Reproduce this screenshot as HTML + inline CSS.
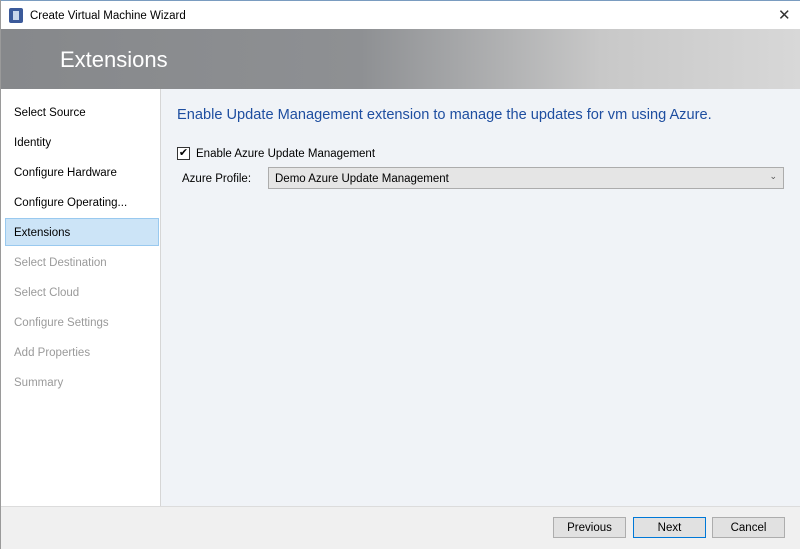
<!DOCTYPE html>
<html><head><style>
*{margin:0;padding:0;box-sizing:border-box}
body{width:800px;height:549px;overflow:hidden;font-family:"Liberation Sans",sans-serif;font-size:11.5px;color:#000;background:#fff;position:relative;border:1px solid #9a9a9a;border-top:none}
.abs{position:absolute}
#title{left:0;top:0;width:800px;height:29px;background:#fff;border-top:1px solid #7a9cc0}
#banner{left:0;top:29px;width:800px;height:60px;background:linear-gradient(90deg,#86888b 0%,#8e9093 45%,#c8c8c8 75%,#d8d8d8 100%)}
#nav{left:0;top:89px;width:160px;height:417px;background:#fff;border-right:1px solid #d6d6d6}
#content{left:160px;top:89px;width:639px;height:417px;background:#f0f3f7}
#footer{left:0;top:506px;width:800px;height:43px;background:#f0f0f0;border-top:1px solid #dcdcdc}
.nav{position:absolute;left:13px;font-size:11.5px}
.dis{color:#9a9a9a}
.btn{position:absolute;top:517px;width:73px;height:21px;background:#e1e1e1;border:1px solid #adadad;text-align:center;line-height:20px;font-size:11.5px}
</style></head><body>
<div id="title" class="abs">
 <div class="abs" style="left:8px;top:7px;width:14px;height:15px;background:#3b5a9a;border-radius:2px"><div style="margin:3px 4px;width:6px;height:9px;background:#c9d6ea"></div></div>
 <div class="abs" style="left:29px;top:9px;font-size:11.5px">Create Virtual Machine Wizard</div>
 <div class="abs" style="left:777px;top:5px;font-size:15px;color:#333;font-weight:100">✕</div>
</div>
<div id="banner" class="abs"><div class="abs" style="left:59px;top:18px;font-size:22px;color:#fff">Extensions</div></div>
<div id="nav" class="abs"></div>
<div id="content" class="abs"></div>
<div class="abs" style="left:4px;top:218px;width:154px;height:28px;background:#cce4f7;border:1px solid #99c9ef"></div>
<div class="nav" style="top:107px">Select Source</div>
<div class="nav" style="top:137px">Identity</div>
<div class="nav" style="top:167px">Configure Hardware</div>
<div class="nav" style="top:197px">Configure Operating...</div>
<div class="nav" style="top:227px">Extensions</div>
<div class="nav dis" style="top:257px">Select Destination</div>
<div class="nav dis" style="top:287px">Select Cloud</div>
<div class="nav dis" style="top:317px">Configure Settings</div>
<div class="nav dis" style="top:347px">Add Properties</div>
<div class="nav dis" style="top:377px">Summary</div>
<div class="abs" style="left:176px;top:107px;font-size:14.6px;color:#1e4ea0">Enable Update Management extension to manage the updates for vm using Azure.</div>
<div class="abs" style="left:176px;top:147px;width:13px;height:13px;border:1px solid #333;background:#fff;font-size:11px;line-height:11px;text-align:center">✔</div>
<div class="abs" style="left:195px;top:148px">Enable Azure Update Management</div>
<div class="abs" style="left:181px;top:173px">Azure Profile:</div>
<div class="abs" style="left:267px;top:167px;width:516px;height:22px;background:#e5e5e5;border:1px solid #acacac;padding:5px 6px">Demo Azure Update Management<span style="position:absolute;right:6px;top:3px;font-size:9px;color:#555">⌄</span></div>
<div id="footer" class="abs"></div>
<div class="btn" style="left:552px">Previous</div>
<div class="btn" style="left:632px;border-color:#0078d7">Next</div>
<div class="btn" style="left:711px">Cancel</div>
</body></html>
